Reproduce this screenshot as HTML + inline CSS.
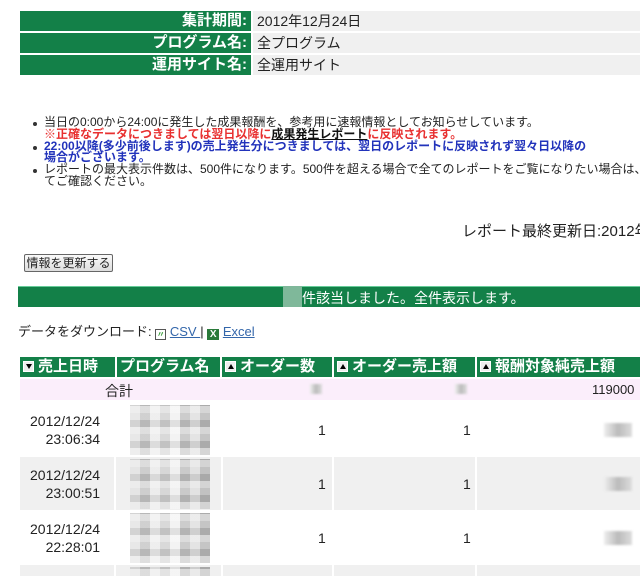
<!DOCTYPE html>
<html><head><meta charset="utf-8">
<style>
*{margin:0;padding:0;box-sizing:border-box}
html{width:640px;height:576px;overflow:hidden}
body{width:640px;height:576px;overflow:hidden;background:#fff;font-family:"Liberation Sans","Noto Sans CJK JP",sans-serif;color:#222;position:relative}
.a{position:absolute;white-space:nowrap}
.lab{position:absolute;left:20px;width:231px;height:20px;background:#138048;color:#fff;font-weight:bold;font-size:15px;text-align:right;padding-right:4px;line-height:20px}
.val{position:absolute;left:253px;width:387px;height:20px;background:#f0f0f0;font-size:14px;line-height:20px;padding-left:4px}
.ul{position:absolute;left:30px;top:117px;font-size:12px;line-height:11.8px;width:640px}
.ul div{position:relative;padding-left:14px}
.ul .b:before{content:"";position:absolute;left:3px;top:5px;width:4px;height:4px;border-radius:2px;background:#333}
.red{color:#e83030;font-weight:bold}
.blue{color:#2233bb;font-weight:bold}
.th{position:absolute;top:357px;height:20px;background:#138048;color:#fff;font-size:15px;line-height:20px;font-weight:bold}
.ic{display:inline-block;width:11px;height:11px;background:#eee;border:1px solid #fff;vertical-align:-1px;margin:0 4px 0 3px;position:relative}
.ic:after{content:"";position:absolute;left:2px;top:2px;border-left:3px solid transparent;border-right:3px solid transparent}
.up:after{border-bottom:5px solid #000}
.dn:after{border-top:5px solid #000}
.row{position:absolute;left:20px;width:620px;height:53px}
.sm{position:absolute;width:28px;height:14px;background:linear-gradient(90deg,#eee,#bbb,#ddd);filter:blur(1px)}
.blob{position:absolute;left:130px;width:80px;height:50px;background:
repeating-linear-gradient(0deg,rgba(255,255,255,.45) 0 7px,rgba(0,0,0,.08) 7px 14px,rgba(255,255,255,.2) 14px 21px),
repeating-linear-gradient(90deg,#ddd 0 10px,#bbb 10px 20px,#e8e8e8 20px 30px,#c8c8c8 30px 40px,#eee 40px 50px,#b5b5b5 50px 60px,#d8d8d8 60px 70px,#aaa 70px 80px);opacity:.85}
</style></head><body>
<div class="lab" style="top:11px">集計期間:</div><div class="val" style="top:11px">2012年12月24日</div>
<div class="lab" style="top:33px">プログラム名:</div><div class="val" style="top:33px">全プログラム</div>
<div class="lab" style="top:55px">運用サイト名:</div><div class="val" style="top:55px">全運用サイト</div>

<div class="ul">
<div class="b">当日の0:00から24:00に発生した成果報酬を、参考用に速報情報としてお知らせしています。</div>
<div class="red">※正確なデータにつきましては翌日以降に<span style="color:#111;text-decoration:underline">成果発生レポート</span>に反映されます。</div>
<div class="b blue">22:00以降(多少前後します)の売上発生分につきましては、翌日のレポートに反映されず翌々日以降の</div>
<div class="blue">場合がございます。</div>
<div class="b">レポートの最大表示件数は、500件になります。500件を超える場合で全てのレポートをご覧になりたい場合は、</div>
<div>てご確認ください。</div>
</div>

<div class="a" style="left:462px;top:220px;font-size:15px">レポート最終更新日:2012年</div>

<div class="a" style="left:24px;top:254px;width:89px;height:18px;border:1px solid #666;border-radius:2px;background:linear-gradient(#fafafa,#ddd);font-size:12px;line-height:16px;text-align:center">情報を更新する</div>

<div class="a" style="left:18px;top:286px;width:622px;height:21px;background:#138048;border-top:1px solid #6c9"></div>
<div class="a" style="left:283px;top:286px;width:19px;height:21px;background:#7fb89a"></div>
<div class="a" style="left:302px;top:288px;font-size:14px;color:#fff">件該当しました。全件表示します。</div>

<div class="a" style="left:18px;top:321px;font-size:13px">データをダウンロード: <span style="display:inline-block;width:11px;height:11px;border:1px solid #555;vertical-align:-1px;font-size:8px;line-height:9px;color:#393;font-weight:bold;text-align:center">〃</span> <span style="color:#36a;text-decoration:underline">CSV </span> | <span style="display:inline-block;width:12px;height:11px;background:#2a7a3a;color:#fff;font-size:10px;line-height:11px;text-align:center;font-weight:bold;vertical-align:-1px">X</span> <span style="color:#36a;text-decoration:underline">Excel </span></div>

<div class="th" style="left:20px;width:95px"><span class="ic dn"></span>売上日時</div>
<div class="th" style="left:117px;width:103px;padding-left:3px">プログラム名</div>
<div class="th" style="left:222px;width:110px"><span class="ic up"></span>オーダー数</div>
<div class="th" style="left:334px;width:141px"><span class="ic up"></span>オーダー売上額</div>
<div class="th" style="left:477px;width:163px"><span class="ic up"></span>報酬対象純売上額</div>

<div class="a" style="left:20px;top:379px;width:620px;height:21px;background:#fbeefb"></div>
<div class="a" style="left:105px;top:381px;font-size:14px">合計</div>
<div class="sm" style="left:310px;top:384px;width:12px;height:10px"></div>
<div class="sm" style="left:455px;top:384px;width:12px;height:10px"></div>
<div class="a" style="left:592px;top:382px;font-size:13px">119000</div>

<div class="row" style="top:403px;background:#fff"></div>
<div class="row" style="top:457px;background:#f0f0f0"></div>
<div class="row" style="top:511px;background:#fff"></div>
<div class="row" style="top:565px;height:11px;background:#f0f0f0"></div>
<div class="a" style="left:114px;top:457px;width:2px;height:53px;background:#fff"></div>
<div class="a" style="left:221px;top:457px;width:2px;height:53px;background:#fff"></div>
<div class="a" style="left:332px;top:457px;width:2px;height:53px;background:#fff"></div>
<div class="a" style="left:475px;top:457px;width:2px;height:53px;background:#fff"></div>
<div class="a" style="left:114px;top:565px;width:2px;height:11px;background:#fff"></div>
<div class="a" style="left:221px;top:565px;width:2px;height:11px;background:#fff"></div>
<div class="a" style="left:332px;top:565px;width:2px;height:11px;background:#fff"></div>
<div class="a" style="left:475px;top:565px;width:2px;height:11px;background:#fff"></div>

<div class="a" style="left:30px;top:412px;font-size:14px;text-align:right;line-height:18px">2012/12/24<br>&nbsp;&nbsp;&nbsp;&nbsp;23:06:34</div>
<div class="a" style="left:30px;top:466px;font-size:14px;text-align:right;line-height:18px">2012/12/24<br>&nbsp;&nbsp;&nbsp;&nbsp;23:00:51</div>
<div class="a" style="left:30px;top:520px;font-size:14px;text-align:right;line-height:18px">2012/12/24<br>&nbsp;&nbsp;&nbsp;&nbsp;22:28:01</div>

<div class="a" style="left:318px;top:476px;font-size:14px">1</div>
<div class="a" style="left:463px;top:476px;font-size:14px">1</div>
<div class="a" style="left:318px;top:422px;font-size:14px">1</div>
<div class="a" style="left:463px;top:422px;font-size:14px">1</div>
<div class="a" style="left:318px;top:530px;font-size:14px">1</div>
<div class="a" style="left:463px;top:530px;font-size:14px">1</div>
<div class="sm" style="left:604px;top:423px"></div>
<div class="sm" style="left:604px;top:477px"></div>
<div class="sm" style="left:604px;top:531px"></div>

<div class="blob" style="top:405px"></div>
<div class="blob" style="top:459px"></div>
<div class="blob" style="top:513px"></div>
<div class="blob" style="top:567px;height:9px"></div>
</body></html>
